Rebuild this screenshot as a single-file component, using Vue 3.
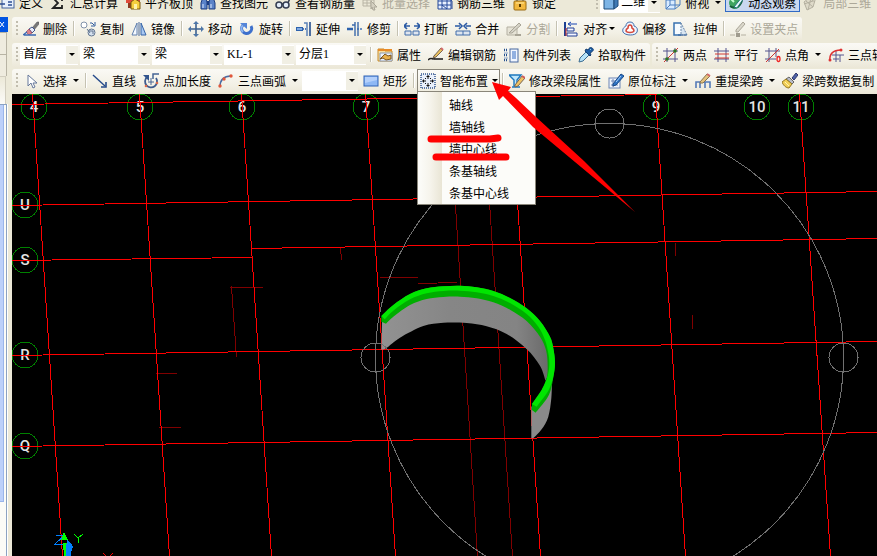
<script setup>
import { ref } from 'vue'

const icons = {
  define: '<rect x="3" y="1" width="12" height="12" fill="#e8f0fc" stroke="#44639c"/><path d="M0 9h6M9 7h4M9 10h4" stroke="#2b4c93" stroke-width="1.5"/>',
  sum: '<path d="M12 6V3H3l5 5-5 5h9v-3" fill="none" stroke="#222" stroke-width="1.8"/>',
  level: '<path d="M1 4h14v4H1z" fill="#e04a3a"/><path d="M3 8h5v5H3z" fill="#8a3a20"/><path d="M6 7l4-3 5 3v7H6z" fill="#f6cf3e" stroke="#7a5a10"/><path d="M9 9h3v5H9z" fill="#fff3a8"/>',
  find: '<path d="M1 8l2-6h3l1 6v6H1zM9 8l1-6h3l2 6v6H9z" fill="#5b83c8" stroke="#1c3c80"/><path d="M7 6h2v4H7z" fill="#1c3c80"/><path d="M3 9v4M11 9v4" stroke="#dce9ff"/>',
  glasses: '<circle cx="4" cy="10" r="3" fill="#e3ecf8" stroke="#333c50" stroke-width="1.5"/><circle cx="11" cy="10" r="3" fill="#e3ecf8" stroke="#333c50" stroke-width="1.5"/><path d="M7 9h1M13 8l2-5" stroke="#333c50" stroke-width="1.5"/>',
  batch: '<path d="M1 2h11v9H1zM1 5h11M1 8h11M5 2v9M9 2v9" fill="none" stroke="#b8b4a4"/><path d="M9 6l6 6h-3l1 3-2 0-1-3-1 2z" fill="#d4d0c0" stroke="#aca899"/>',
  rebar3d: '<path d="M1 2h13v12H1zM1 6h13M1 10h13M5 2v12M10 2v12" fill="#e8f0ff" stroke="#24489a"/><path d="M10 2l5 4v8M5 10l5 4" fill="none" stroke="#24489a"/>',
  lock: '<path d="M5 8V4a3 3 0 0 1 6 0v4" fill="none" stroke="#8a8a8a" stroke-width="2"/><rect x="2" y="6" width="12" height="9" rx="1" fill="#f3b93f" stroke="#9a6a10"/><path d="M4 8h8" stroke="#ffe9a0"/><path d="M8 9v3" stroke="#5a3b00" stroke-width="2"/>',
  cube: '<path d="M1 4h10v10H1z" fill="#7db4e6" stroke="#1f4c7c"/><path d="M1 4l3-3h11l-4 3zM11 14l4-3V1l-4 3z" fill="#3f79b4" stroke="#1f4c7c"/>',
  view: '<path d="M1 5h9v9H1z" fill="#d8ebff" stroke="#4b7fc0"/><path d="M1 5l4-4h10v9l-5 4M10 5l5-4M5 1v9h10M5 10l-4 4" fill="none" stroke="#4b7fc0"/>',
  orbit: '<circle cx="7" cy="8" r="6" fill="#3fa560"/><path d="M2 11c5 4 12-1 12-7" fill="none" stroke="#17613a" stroke-width="2"/><path d="M6 12L14 2l2 1-7 10z" fill="#e6f5fa" stroke="#277"/><path d="M3 4l3 3" stroke="#c6ffd2" stroke-width="2"/>',
  local3d: '<path d="M1 7l5-4 7-1-3 10-6 3zM3 6l7 6M6 3l6 4M5 15L8 3M1 9l9-3" fill="#dedac9" stroke="#b4b0a0"/>',
  erase: '<path d="M9 7l5-6h2v2l-5 6z" fill="#777" stroke="#555" stroke-width=".5"/><path d="M6 8l3-2 3 3-3 3z" fill="#e8ecf8" stroke="#41568c"/><path d="M3 11l3-3 3 4-3 2z" fill="#d9828a" stroke="#8f3550" stroke-width=".6"/><path d="M0 14l4-3M1 14h12" stroke="#3867b2" stroke-width="1.4"/>',
  copy: '<circle cx="4" cy="4" r="3" fill="#fff" stroke="#8292aa"/><circle cx="11.500" cy="11.500" r="3.500" fill="#d5e1ef" stroke="#62758f"/><path d="M7 8l3 4M9 10h4v3" fill="none" stroke="#62758f"/><path d="M10 2h2l2 2M15 1v4h-4" fill="none" stroke="#2e5a9c"/>',
  mirror: '<path d="M6 2v12H1z" fill="#f5faff" stroke="#5f7fae"/><path d="M10 2v12h5z" fill="#a9c8f2" stroke="#3564a8"/><path d="M8 1v14" stroke="#49699a"/>',
  move: '<path d="M8 2v12M2 8h12" stroke="#3c6190" stroke-width="1.6"/><path d="M8 0l3 3H5zM8 16l3-3H5zM0 8l3-3v6zM16 8l-3-3v6z" fill="#4d76a8"/>',
  rotate: '<path d="M4 4a5 5 0 1 0 8 1" fill="none" stroke="#3d70cc" stroke-width="3"/><path d="M4 4a5 5 0 0 0 0 7" fill="none" stroke="#8db5f2" stroke-width="2"/><path d="M1 2h7v6z" fill="#5585d8"/>',
  extend: '<path d="M0 8h7" stroke="#2d62ad" stroke-width="4"/><path d="M1 8h5" stroke="#9fc3f3" stroke-width="1.500"/><path d="M7 8h4" stroke="#4d76b8" stroke-dasharray="1 1" stroke-width="2"/><path d="M8 2h3v13" fill="none" stroke="#5b81b8" stroke-width="1.500"/><path d="M14 1v14" stroke="#234d8f" stroke-width="1.6"/>',
  trim: '<path d="M0 8h6" stroke="#2d62ad" stroke-width="2.500"/><path d="M10 8h6" stroke="#6f94c5" stroke-width="2" stroke-dasharray="2 1"/><path d="M5 4h3V1M8 4v11M11 1v14" fill="none" stroke="#3b69aa" stroke-width="1.4"/>',
  breakIcon: '<path d="M1 10h6v4H1zM9 10h6v4H9z" fill="#dfe5ee" stroke="#416daa"/><path d="M1 5h5M15 5h-5M3 2L0 5l3 3M13 2l3 3-3 3" fill="none" stroke="#2b5aa4" stroke-width="1.6"/>',
  merge: '<path d="M1 10h14v4H1z" fill="#dce4ee" stroke="#416daa"/><path d="M8 10v4" stroke="#416daa"/><path d="M0 5h5M16 5h-5M4 2l3 3-3 3M12 2L9 5l3 3" fill="none" stroke="#2b5aa4" stroke-width="1.6"/>',
  split: '<path d="M1 6h10v8H1z" fill="#e6e3d6" stroke="#b4b0a2"/><path d="M3 12L13 2l2 2L6 12z" fill="#d6d3c8" stroke="#a8a496"/><path d="M9 14h6" stroke="#a8a496" stroke-width="2"/>',
  align: '<path d="M2 1v14" stroke="#1c3f92" stroke-width="2"/><path d="M14 3H6M8 1L5 3l3 2" fill="none" stroke="#1743b2"/><path d="M4 7h7v3H4zM4 12h10v3H4z" fill="#f3f5ff" stroke="#203f94"/><path d="M3 7v8" stroke="#d03028"/>',
  offset: '<path d="M8 1c3 0 4 2 4 4 3 1 4 3 3 6-1 4-12 4-14 0-1-3 1-5 3-6 0-2 1-4 4-4z" fill="#edf5ff" stroke="#426fae"/><path d="M8 4c2 0 2 2 2 3 2 1 2 2 2 3-1 2-7 2-8 0 0-1 0-2 2-3 0-1 0-3 2-3z" fill="#fff" stroke="#d5493c" stroke-width="1.6"/>',
  stretch: '<path d="M8 2H1v12h7" fill="#f6fbff" stroke="#3972b0" stroke-width="1.5"/><path d="M8 2v12l6 0z" fill="#d9e6f2" stroke="#6a88ab" stroke-dasharray="2 1"/><path d="M5 14h9" stroke="#315e99"/>',
  grip: '<path d="M0 14h5M11 14h5" stroke="#b4b0a2"/><rect x="6" y="12" width="4" height="4" fill="#9f9b8e"/><path d="M6 9l7-8 2 2-7 8H6z" fill="#dad7cb" stroke="#aaa698"/>',
  props: '<path d="M1 2h6l1 2h7v10H1z" fill="#f8e0a2" stroke="#c58b2e"/><path d="M1 3h14" stroke="#e98c27" stroke-width="2"/><path d="M3 6h12v8H3z" fill="#eff4fb" stroke="#8d9bb0"/><path d="M3 12l5-5 3 2 3-1v4l-5 1-3-2z" fill="#e8b04a" stroke="#7a5520"/>',
  editbar: '<path d="M0 13c4-4 5 1 6-2l1-3" fill="none" stroke="#222" stroke-width="1.6"/><path d="M6 9l7-8 2 2-7 7-3 1z" fill="#eac15c" stroke="#765"/><path d="M13 1l2 2" stroke="#d26969" stroke-width="2"/><path d="M6 12h9" stroke="#222" stroke-width="1.6"/>',
  list: '<path d="M1 3h3M1 8h3M1 13h3" stroke="#24508f" stroke-width="2.500" stroke-dasharray="1 1"/><path d="M1 6h4M1 11h4" stroke="#8aa5ca"/><rect x="7" y="2" width="8" height="13" fill="#f1f6ff" stroke="#49699f"/><path d="M9 5h4M9 7h4M9 9h4M9 11h4" stroke="#336bc2"/>',
  pick: '<path d="M1 15l1-4 6-6 3 3-6 6z" fill="#b7e3f8" stroke="#3e6d92"/><path d="M7 4l5 5 1-1-1-2c4-2 4-4 2-5s-3 0-4 2l-2-1z" fill="#1f5fa8" stroke="#163e70"/><path d="M12 2l1 1" stroke="#9cd"/>',
  twopt: '<path d="M0 4h15M0 12h15M4 1v14M12 1v14" stroke="#55558d"/><path d="M1 15L15 1" stroke="#c33"/><circle cx="4" cy="12" r="1.800" fill="#2e7421"/><circle cx="12" cy="4" r="1.800" fill="#2e7421"/>',
  parallel: '<path d="M0 4h15M0 12h15M4 1v14M12 1v14" stroke="#55558d"/><path d="M1 7h14M1 11h14" stroke="#d43b31"/>',
  ptangle: '<path d="M0 4h15M0 12h11M4 1v14M11 1v9" stroke="#55558d"/><path d="M1 15L14 2" stroke="#c33"/><ellipse cx="13.500" cy="12" rx="1.500" ry="2.500" fill="none" stroke="#e22" stroke-width="1.300"/>',
  threept: '<path d="M4 8h12M8 4v11M12 8v7M5 12h6" stroke="#55558d"/><path d="M2 14C1 7 5 3 13 3" fill="none" stroke="#d33" stroke-width="1.500"/><circle cx="2" cy="13" r="1.500" fill="#d33"/><circle cx="13" cy="3" r="1.500" fill="#d33"/>',
  select: '<path d="M5 2v11l3-3 2 5 2-1-2-4h4z" fill="#fff" stroke="#67799b"/>',
  line: '<path d="M1 2l12 11" stroke="#254a8a" stroke-width="1.4"/><path d="M14 9v5H9" fill="none" stroke="#254a8a" stroke-width="1.6"/>',
  ptlen: '<path d="M4 4a6 6 0 1 0 9 1" fill="none" stroke="#3d5b8f" stroke-width="1.800"/><path d="M0 2h6v6z" fill="#32558e"/><path d="M8 5v7M5 9h6" stroke="#466494"/><path d="M10 6V1h6" fill="none" stroke="#466494" stroke-width="1.500"/><circle cx="3" cy="13" r="1.300" fill="#d86a4c"/><circle cx="14" cy="10" r="1.300" fill="#d86a4c"/>',
  arc: '<path d="M2 14C2 7 6 3 13 3" fill="none" stroke="#4a6ca3" stroke-width="1.500"/><circle cx="2" cy="13" r="1.700" fill="#e0573b"/><circle cx="6" cy="6" r="1.700" fill="#e0573b"/><circle cx="13" cy="3" r="1.700" fill="#e0573b"/>',
  rect: '<rect x="1" y="3" width="14" height="10" fill="#8eb8f5" stroke="#2e62b6"/><path d="M2 4h12v3L2 10z" fill="#b4d0fb"/>',
  smart: '<rect x="1" y="1" width="14" height="14" fill="#e9f0fb" stroke="#32558e" stroke-dasharray="1 1" stroke-width="1.500"/><path d="M8 3v3M8 10v3M3 8h3M10 8h3" stroke="#111"/><path d="M8 2l2 2H6zM8 14l2-2H6zM2 8l2-2v4zM14 8l-2-2v4z" fill="#111"/><path d="M5 5l1 1M11 5l-1 1M5 11l1-1M11 11l-1-1" stroke="#111"/>',
  modify: '<path d="M0 2h12l-4 5v6H5V7z" fill="#bfe6fb" stroke="#1d77bd" stroke-width="1.400"/><path d="M3 14h8" stroke="#1d77bd" stroke-width="1.500"/><path d="M6 12l7-9 3 2-7 8-3 1z" fill="#f0c262" stroke="#765"/><path d="M13 3l3 2" stroke="#d05d5d" stroke-width="2"/>',
  annotate: '<rect x="1" y="5" width="11" height="10" fill="#f0f5fd" stroke="#6c86b6"/><path d="M3 8h7M3 12h7M5 6v8" stroke="#6c86b6"/><path d="M5 11L13 1l3 2-8 9-3 1z" fill="#2f74c6" stroke="#174887"/><path d="M8 9l5-6" stroke="#a7d3ff"/>',
  respan: '<path d="M1 15V9h14v6M5 15V9M10 15V9" fill="none" stroke="#547bb8" stroke-width="1.600"/><path d="M5 9l7-8 3 2-7 7H5z" fill="#e5c27e" stroke="#867452"/><path d="M12 1l3 2" stroke="#d56a6a" stroke-width="2"/>',
  brush: '<path d="M10 5l4-5 2 2-4 5z" fill="#4f63a6" stroke="#30386c"/><path d="M7 4l5 5-2 2-6-5z" fill="#b9bcc8" stroke="#666"/><path d="M4 6l6 5-3 4c-3 0-6-3-7-6z" fill="#f1cf58" stroke="#92751f"/><path d="M3 9l4 4" stroke="#fff4b0"/>'
}

const b = (icon, label, opt = {}) => ({ type: 'button', icon, label, ...opt })
const sep = { type: 'sep' }
const s = (label, name, width, icon) => ({ type: 'select', label, name, width, icon })

const topBars = [
  { first: true, items: [
    b('define', '定义'), b('sum', '汇总计算'), b('level', '平齐板顶'), b('find', '查找图元'),
    b('glasses', '查看钢筋量'), b('batch', '批量选择', { disabled: true }), b('rebar3d', '钢筋三维'), b('lock', '锁定')
  ] },
  { items: [
    s('二维', '显示模式', 'medium', 'cube'), b('view', '俯视', { drop: true }),
    b('orbit', '动态观察', { active: true }), b('local3d', '局部三维', { disabled: true })
  ] }
]

const rows = [
  [{ items: [
    b('erase', '删除'), sep, b('copy', '复制'), b('mirror', '镜像'), sep, b('move', '移动'), b('rotate', '旋转'), sep,
    b('extend', '延伸'), b('trim', '修剪'), sep, b('breakIcon', '打断'), b('merge', '合并'),
    b('split', '分割', { disabled: true }), sep, b('align', '对齐', { drop: true, tight: true }), b('offset', '偏移'),
    b('stretch', '拉伸'), sep, b('grip', '设置夹点', { disabled: true })
  ] }],
  [{ items: [
    s('首层', '楼层', 'small'), s('梁', '构件类型', 'large'), s('梁', '构件', 'large'), s('KL-1', '构件名称', 'large'),
    s('分层1', '分层', 'large'), sep, b('props', '属性'), b('editbar', '编辑钢筋'), b('list', '构件列表'), b('pick', '拾取构件')
  ] }, { grow: true, items: [
    b('twopt', '两点'), b('parallel', '平行'), b('ptangle', '点角', { drop: true }), b('threept', '三点轴')
  ] }],
  [{ grow: true, items: [
    b('select', '选择', { drop: true }), sep, b('line', '直线'), b('ptlen', '点加长度'), b('arc', '三点画弧', { drop: true }),
    s('', '画弧方式', 'tiny'), b('rect', '矩形'), sep, b('smart', '智能布置', { drop: true, menu: true }), sep,
    b('modify', '修改梁段属性'), b('annotate', '原位标注', { drop: true }), b('respan', '重提梁跨', { drop: true }),
    b('brush', '梁跨数据复制')
  ] }]
]
const allRows = [topBars, ...rows]

const menuOpen = ref(true)
const menu = ['轴线', '墙轴线', '墙中心线', '条基轴线', '条基中心线']

const bubbles = [
  [34, 107, '4'], [140, 107, '5'], [242, 107, '6'], [366, 107, '7'], [656, 107, '9'], [757, 107, '10'], [801, 107, '11'],
  [25, 205, 'U'], [25, 260, 'S'], [25, 355, 'R'], [25, 446, 'Q']
]
const axes = [
  [32, 94, 62, 556], [139, 94, 169, 556], [241, 94, 271, 556], [365, 94, 395, 556], [510, 94, 540, 556],
  [655, 94, 685, 556], [799, 94, 830, 556],
  [12, 104, 657, 94], [12, 205, 877, 191], [12, 260, 252, 257], [251, 248, 877, 238], [12, 355, 877, 341], [12, 446, 877, 432]
]
const faint = [
  [448, 94, 477, 556], [482, 94, 512, 556], [229, 287, 262, 287], [231, 286, 236, 357], [340, 247, 341, 260],
  [379, 277, 417, 277], [418, 283, 457, 282], [155, 373, 176, 373], [158, 427, 180, 427], [675, 242, 675, 255],
  [692, 314, 692, 328]
]

// Closed outline whose edges are smooth curves through their points, joined by straight ends.
function outline(...edges) {
  let d = ''
  edges.forEach((p, e) => {
    d += `${e ? 'L' : 'M'}${p[0]}`
    for (let i = 0; i < p.length - 1; i++) {
      const a = p[Math.max(i - 1, 0)]
      const q = p[i]
      const r = p[i + 1]
      const z = p[Math.min(i + 2, p.length - 1)]
      d += `C${q[0] + (r[0] - a[0]) / 6} ${q[1] + (r[1] - a[1]) / 6} ${r[0] - (z[0] - q[0]) / 6} ${r[1] - (z[1] - q[1]) / 6} ${r[0]} ${r[1]}`
    }
  })
  return d + 'Z'
}
const outer = [[64, 138], [100, 105], [150, 72], [200, 55], [250, 49], [300, 47], [350, 52], [400, 63], [450, 84], [500, 115], [540, 153], [570, 200], [580, 235], [585, 280]]
const wallFar = outline(
  [[66, 150], [150, 90], [250, 70], [350, 70], [450, 105], [520, 160], [560, 220], [572, 280], [558, 332]],
  [[556, 330], [540, 287], [500, 237], [440, 192], [380, 169], [320, 159], [250, 158], [190, 168], [120, 203], [78, 235], [64, 240]]
)
const wallNear = outline([[576, 335], [574, 385], [565, 440], [545, 478], [520, 505]], [[514, 505], [514, 410]], [[550, 380]])
const beamSide = outline(
  [...outer, [577, 340], [567, 374], [550, 400], [527, 428]],
  [[516, 420], [516, 402]],
  [[545, 360], [560, 325], [563, 285], [558, 240], [540, 200], [500, 153], [450, 119], [400, 97], [350, 85], [300, 80], [250, 81], [200, 87], [150, 105], [100, 140], [78, 161]],
  [[64, 155]]
)
const beamTop = outline(
  [...outer, [580, 320], [565, 362], [530, 410]],
  [[516, 402], [545, 360], [562, 320], [568, 285], [565, 250], [555, 210], [535, 170], [500, 132], [450, 99], [400, 78], [350, 67], [300, 62], [250, 63], [200, 70], [150, 88], [100, 122], [74, 148]]
)
</script>

<template>
  <div class="app">
    <header class="tools">
      <div v-for="(row, r) in allRows" :key="r" class="row" :class="{ top: r === 0 }">
        <div v-for="(bar, k) in row" :key="k" class="bar" :class="{ grow: bar.grow, first: bar.first }" role="toolbar">
          <span v-if="!bar.first" class="handle"></span>
          <template v-for="(it, i) in bar.items" :key="i">
            <span v-if="it.type === 'sep'" class="sep"></span>
            <label v-else-if="it.type === 'select'" class="combo" :class="it.width">
              <select :aria-label="it.name" :class="{ 'with-icon': it.icon }"><option>{{ it.label }}</option></select>
              <svg v-if="it.icon" class="icon" viewBox="0 0 16 16" v-html="icons[it.icon]"></svg>
              <span class="knob"><i class="tri"></i></span>
            </label>
            <div v-else-if="it.menu" class="holder">
              <button type="button" class="tool open" :aria-expanded="menuOpen" @click="menuOpen = !menuOpen">
                <svg class="icon" viewBox="0 0 16 16" v-html="icons[it.icon]"></svg>
                <span>{{ it.label }}</span><i class="tri"></i>
              </button>
              <div v-if="menuOpen" class="menu" role="menu">
                <button v-for="m in menu" :key="m" type="button" role="menuitem">{{ m }}</button>
              </div>
            </div>
            <button v-else type="button" class="tool" :class="{ active: it.active, tight: it.tight }" :disabled="it.disabled">
              <svg class="icon" viewBox="0 0 16 16" v-html="icons[it.icon]"></svg>
              <span>{{ it.label }}</span><i v-if="it.drop" class="tri"></i>
            </button>
          </template>
        </div>
      </div>
    </header>

    <aside class="dock">
      <button type="button" class="close" aria-label="关闭">
        <svg viewBox="0 0 8 15"><path d="M0 5l4 5M4 5l-4 5" stroke="#fff" fill="none" /></svg>
      </button>
      <div class="tab"></div>
      <div class="tab"></div>
      <div class="pane"></div>
      <div class="scroll"><div class="thumb"></div></div>
    </aside>

    <main class="stage">
      <svg class="drawing">
        <g transform="translate(-12 -94)">
          <g class="bubble">
            <g v-for="p in bubbles" :key="p[2]">
              <circle :cx="p[0]" :cy="p[1]" r="13" />
              <text :x="p[0]" :y="p[1] + 5">{{ p[2] }}</text>
            </g>
          </g>
          <g class="faint" transform="translate(.5 .5)"><line v-for="(l, i) in faint" :key="i" :x1="l[0]" :y1="l[1]" :x2="l[2]" :y2="l[3]" /></g>
          <g class="axis" transform="translate(.5 .5)"><line v-for="(l, i) in axes" :key="i" :x1="l[0]" :y1="l[1]" :x2="l[2]" :y2="l[3]" /></g>

          <g transform="translate(360 270) scale(.3333)">
            <defs>
              <linearGradient id="wall" x1="0" x2="1">
                <stop offset="0" stop-color="#929292" /><stop offset=".4" stop-color="#868686" />
                <stop offset=".8" stop-color="#848484" /><stop offset="1" stop-color="#686868" />
              </linearGradient>
            </defs>
            <path fill="url(#wall)" :d="wallFar" />
            <path fill="#8a8a8a" :d="wallNear" />
            <path fill="#00ad00" :d="beamSide" />
            <path fill="#00e600" :d="beamTop" />
          </g>

          <g class="orbit">
            <circle cx="609.500" cy="357.500" r="234" />
            <circle cx="609.500" cy="123.500" r="14.500" />
            <circle cx="375.500" cy="357.500" r="14.500" />
            <circle cx="843.500" cy="357.500" r="14.500" />
          </g>

          <g fill="none" shape-rendering="crispEdges">
            <path d="M56 535h9l-10 9h10" stroke="#0080ff" />
            <path d="M74 534l4 4 5-4M78 538v5" stroke="#0f0" />
            <path d="M103 553l5 5 5-5" stroke="red" />
            <path d="M64 532l4 8h-7zM63 543h4v14h-3z" fill="#0f0" />
            <path d="M67 540l4 3 2 4-2 5v5h-5v-9z" fill="#0080ff" />
          </g>
        </g>
      </svg>
    </main>

    <svg class="markup" aria-hidden="true">
      <path d="M492 82L511 87 508 91 516 98 536 117 584 161 635 212 617 197 533 127 503 96 499 100z" fill="red" />
      <path d="M431 139L490 139 498 138M436 157H506" stroke="red" stroke-width="7" stroke-linecap="round" fill="none" />
    </svg>
  </div>
</template>

<style>
body { margin: 0; background: #ece9d8; }
</style>

<style scoped>
.app {
  position: relative;
  display: grid;
  grid-template: auto 1fr / 12px minmax(0, 1fr);
  height: 100vh;
  overflow: hidden;
  background: #ece9d8;
  color: #000;
  font: 12px/16px "Noto Sans CJK SC", sans-serif;
}
button, select { font: inherit; color: inherit; margin: 0; }
.tools { grid-area: 1 / 1 / 2 / 3; margin-top: -10px; display: flex; flex-direction: column; gap: 1px; z-index: 2; min-width: 0; pointer-events: none; }
.row { display: flex; gap: 2px; padding-left: 12px; }
.row.top { padding-left: 0; gap: 32px; margin-bottom: 1px; }
.bar { display: flex; flex: none; align-items: center; height: 25px; box-sizing: border-box; padding-bottom: 2px; border-radius: 3px; background: linear-gradient(#faf9f5, #f3f1e6 60%, #ebe7d7); pointer-events: auto; }
.bar.grow { flex: 1 0 auto; }
.bar.first { margin-left: -4px; }
.row.top .bar { padding-bottom: 0; background: none; }
.handle { width: 2px; height: 16px; margin: 0 2px 0 4px; background: repeating-linear-gradient(#c1bdae 0 2px, transparent 2px 4px); }
.sep { width: 2px; height: 15px; margin: 0 2px; background: linear-gradient(90deg, #c5c2b2 50%, #fff 50%); }
.tool { display: flex; align-items: center; gap: 4px; height: 23px; box-sizing: border-box; padding: 0 4px 0 3px; border: 0; background: none; white-space: nowrap; }
.tool:disabled { color: #aca899; }
.icon { width: 16px; height: 16px; flex: none; }
.tri { flex: none; width: 0; border: 3px solid transparent; border-top-color: #000; border-bottom: 0; }
.tool .tri { margin-left: 2px; }
.tool.tight .tri { margin-left: -2px; }
.tool.active { height: 19px; background: #c9d8f0; box-shadow: inset 0 0 0 1px #316ac5; }
.holder { position: relative; }
.tool.open { padding-right: 2px; background: linear-gradient(#fdfdfa, #f0ede0); box-shadow: inset 0 0 0 1px #8a867a; }
.tool.open .tri { margin-left: 0; }
.menu {
  position: absolute; left: 0; top: calc(100% - 1px); box-sizing: border-box; width: 119px; padding: 2px 1px 0;
  display: flex; flex-direction: column; border: 1px solid #8a867a;
  background: linear-gradient(90deg, #fcfcf9 1px, #f6f4ec 12px, #e9e5d5 24px, #fcfcf9 24px);
}
.menu button { height: 22px; padding: 0 0 0 30px; border: 0; background: none; text-align: left; }
.combo { display: grid; grid-template-columns: 1fr 12px; margin-right: 2px; height: 20px; background: #fff; align-items: center; }
.tiny { width: 56px; }
.small { width: 58px; }
.medium { width: 60px; }
.large { width: 70px; }
.combo select { grid-area: 1 / 1 / 2 / 3; width: 100%; height: 20px; padding: 0 0 2px 3px; border: 0; background: none; appearance: none; outline: 0; font-family: "Liberation Serif", "Noto Sans CJK SC", serif; }
.combo select.with-icon { padding-left: 21px; }
.combo .icon { grid-area: 1 / 1; margin-left: 3px; pointer-events: none; }
.knob { grid-area: 1 / 2; height: 18px; background: #f1efe4; display: flex; align-items: center; justify-content: center; pointer-events: none; }

.dock { grid-area: 1 / 1 / 3 / 2; display: flex; flex-direction: column; align-items: flex-start; padding-top: 17px; box-sizing: border-box; }
.close { width: 8px; height: 15px; padding: 0; border: 0; background: #0054e3; }
.close svg { display: block; width: 8px; height: 15px; }
.tab { width: 7px; height: 22px; box-sizing: border-box; border: solid #b8b4a4; border-width: 1px 1px 0 0; background: #efecdf; }
.pane { width: 6px; height: 28px; box-sizing: border-box; border: solid #d2cebf; border-width: 1px 1px 0 0; background: linear-gradient(#ece9d8, #fcfbf8); }
.scroll { flex: 1; width: 7px; box-sizing: border-box; border: solid #8ba2c2; border-width: 1px 1px 0 0; background: #fbfbf7; box-shadow: 1px 0 #fff; }
.thumb { width: 4px; height: 88%; box-sizing: border-box; border: solid #9ab5ea; border-width: 0 1px 1px 0; background: #bcd0fa; }

.stage { grid-area: 2 / 2; min-height: 0; background: #000; overflow: hidden; }
.drawing { display: block; width: 100%; height: 100%; }
.axis, .faint { stroke: #f00; shape-rendering: crispEdges; }
.faint { stroke: #800000; }
.bubble circle { fill: none; stroke: #008000; shape-rendering: crispEdges; }
.bubble text { fill: #e4e4e4; font: 500 15px Roboto, sans-serif; text-anchor: middle; }
.orbit { fill: none; stroke: #707070; shape-rendering: crispEdges; }
.markup { position: absolute; inset: 0; width: 100%; height: 100%; z-index: 3; pointer-events: none; }
</style>
